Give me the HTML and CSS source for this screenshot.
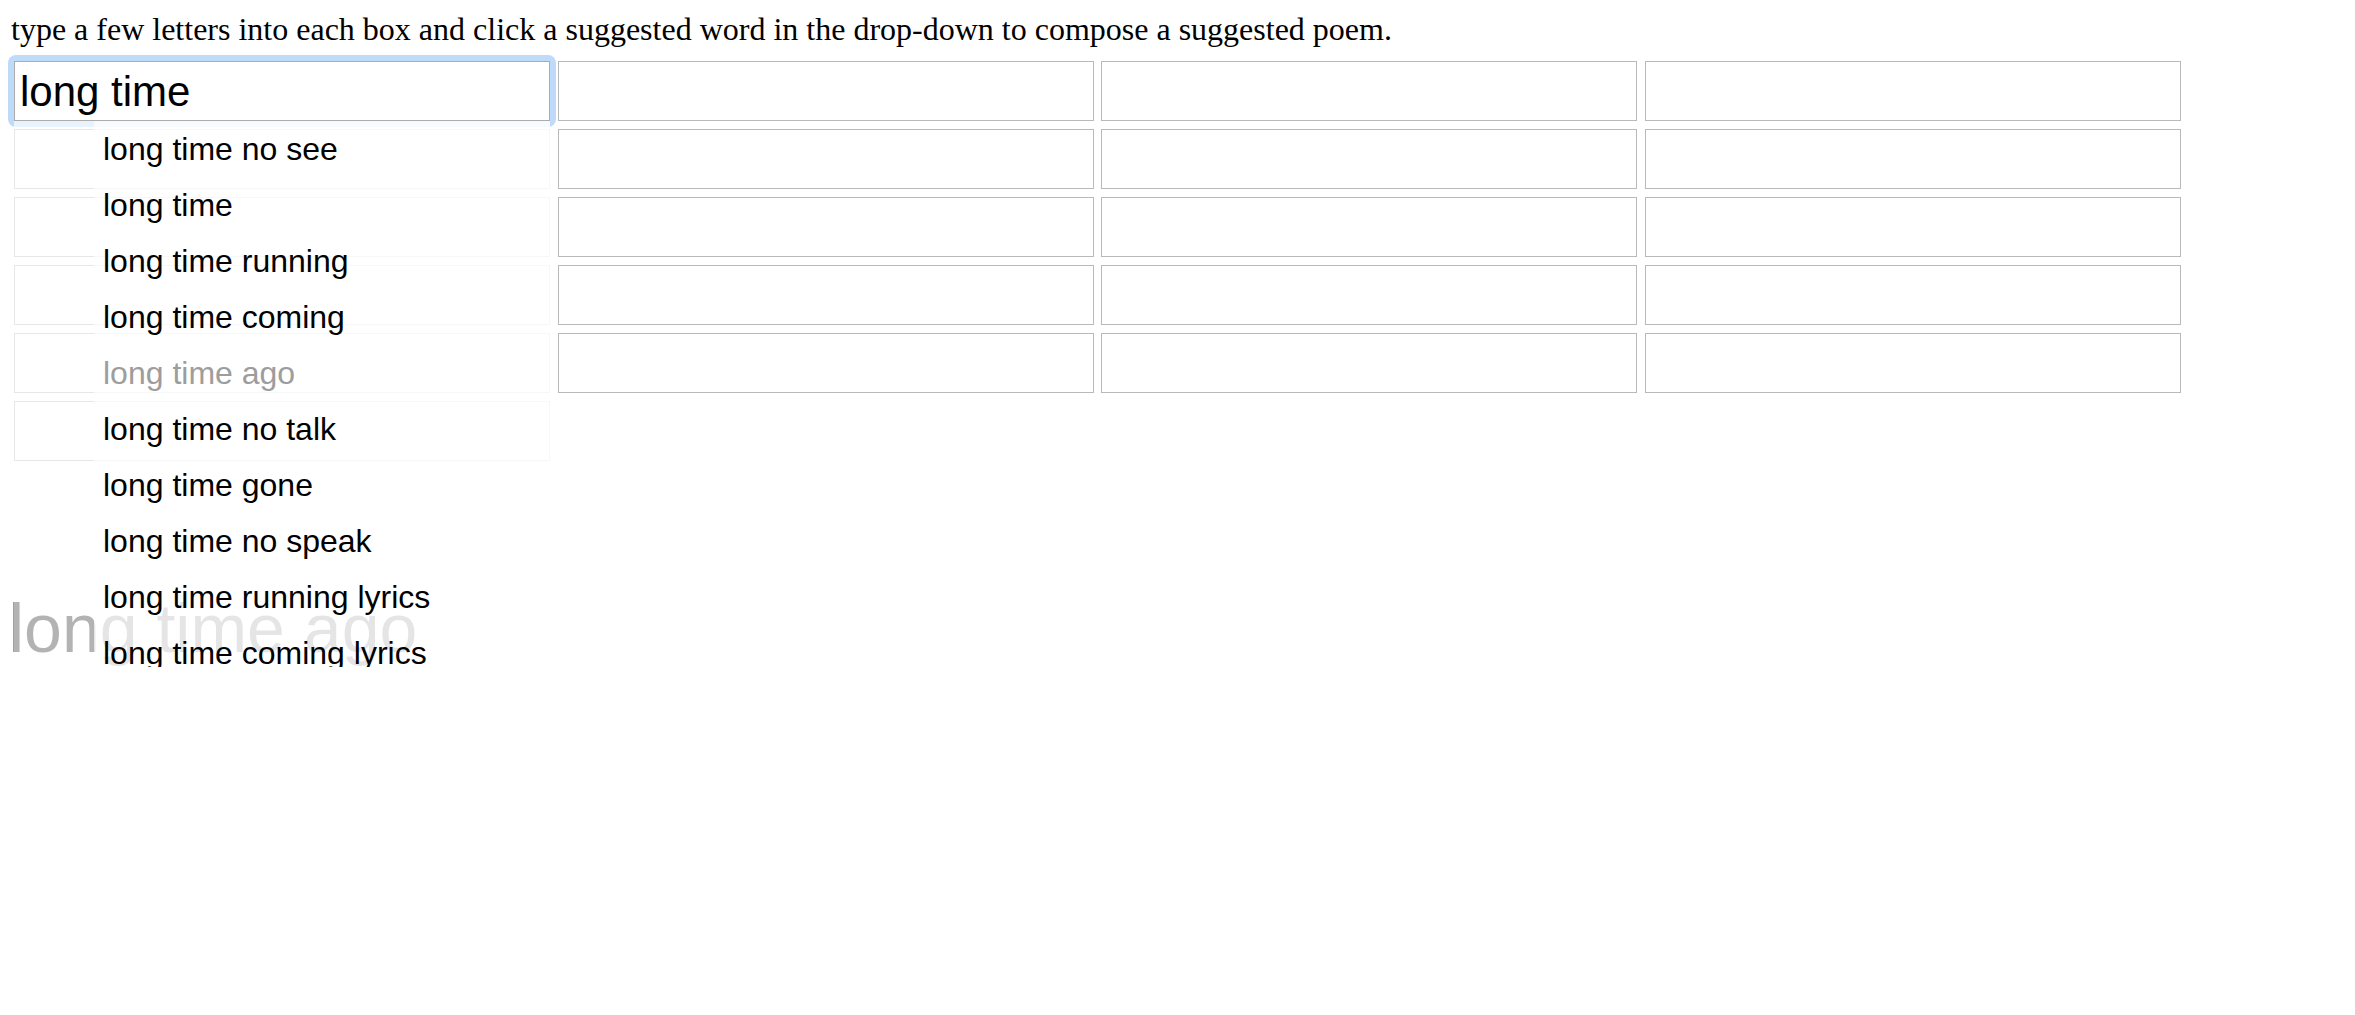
FILE: index.html
```html
<!DOCTYPE html>
<html lang="en">
<head>
    <meta charset="UTF-8">
    <title>suggested poem</title>
    <link rel="stylesheet" href="styles.css">
</head>
<body>
    <p class="intro">type a few letters into each box and click a suggested word in the drop-down to compose a suggested poem.</p>

    <div class="board">
        <div class="column">
            <div class="cell focused">
                <input type="text" class="word" value="long time">
                <div class="dropdown">
                    <ul class="menu">
                        <li>long time no see</li>
                        <li>long time</li>
                        <li>long time running</li>
                        <li>long time coming</li>
                        <li class="hover">long time ago</li>
                        <li>long time no talk</li>
                        <li>long time gone</li>
                        <li>long time no speak</li>
                        <li>long time running lyrics</li>
                        <li>long time coming lyrics</li>
                    </ul>
                </div>
            </div>
            <input type="text" class="word">
            <input type="text" class="word">
            <input type="text" class="word">
            <input type="text" class="word">
            <input type="text" class="word">
        </div>
        <div class="column">
            <input type="text" class="word">
            <input type="text" class="word">
            <input type="text" class="word">
            <input type="text" class="word">
            <input type="text" class="word">
        </div>
        <div class="column">
            <input type="text" class="word">
            <input type="text" class="word">
            <input type="text" class="word">
            <input type="text" class="word">
            <input type="text" class="word">
        </div>
        <div class="column">
            <input type="text" class="word">
            <input type="text" class="word">
            <input type="text" class="word">
            <input type="text" class="word">
            <input type="text" class="word">
        </div>
    </div>

    <div class="poem">long time ago</div>
</body>
</html>
```

FILE: styles.css
```css
:root {
    --box-border: #b9b9b9;
    --ring: #bfdbf9;
    --veil: rgba(255, 255, 255, 0.66);
}

* {
    box-sizing: border-box;
}

body {
    margin: 0;
    padding-top: 11px;
    background: #fff;
    color: #000;
}

.intro {
    margin: 0 0 13px 11px;
    font-family: "Liberation Serif", "Times New Roman", serif;
    font-size: 32px;
}

.board {
    display: flex;
    gap: 7.5px;
    margin-left: 14px;
    align-items: flex-start;
}

.column {
    display: flex;
    flex-direction: column;
    gap: 8px;
    width: 536px;
}

.cell {
    position: relative;
}

/* focus glow around the active box */
.cell.focused::before {
    content: "";
    position: absolute;
    top: -6px;
    right: -6px;
    bottom: -6px;
    left: -6px;
    border-radius: 8px;
    background: var(--ring);
}

.word {
    position: relative;
    display: block;
    width: 536px;
    height: 60px;
    margin: 0;
    padding: 1px 5px 0;
    border: 1px solid var(--box-border);
    border-radius: 0;
    background: #fff;
    font-family: "Liberation Sans", Arial, Helvetica, sans-serif;
    font-size: 42px;
    color: #000;
    outline: none;
}

.cell.focused .word {
    border-color: #acacac;
}

.dropdown {
    position: absolute;
    top: 100%;
    left: 0;
    width: 100%;
    z-index: 2;
    background: var(--veil);
}

.menu {
    list-style: none;
    margin: 0 0 0 80px;
    padding: 0 0 0 9px;
    background: var(--veil);
    font-family: "Liberation Sans", Arial, Helvetica, sans-serif;
    font-size: 32px;
    line-height: 56px;
    white-space: nowrap;
}

.menu li {
    cursor: pointer;
}

.menu li.hover {
    color: #9d9d9d;
}

.poem {
    margin: 128px 0 0 9px;
    font-family: "Liberation Sans", Arial, Helvetica, sans-serif;
    font-size: 68px;
    color: #222;
}
```
